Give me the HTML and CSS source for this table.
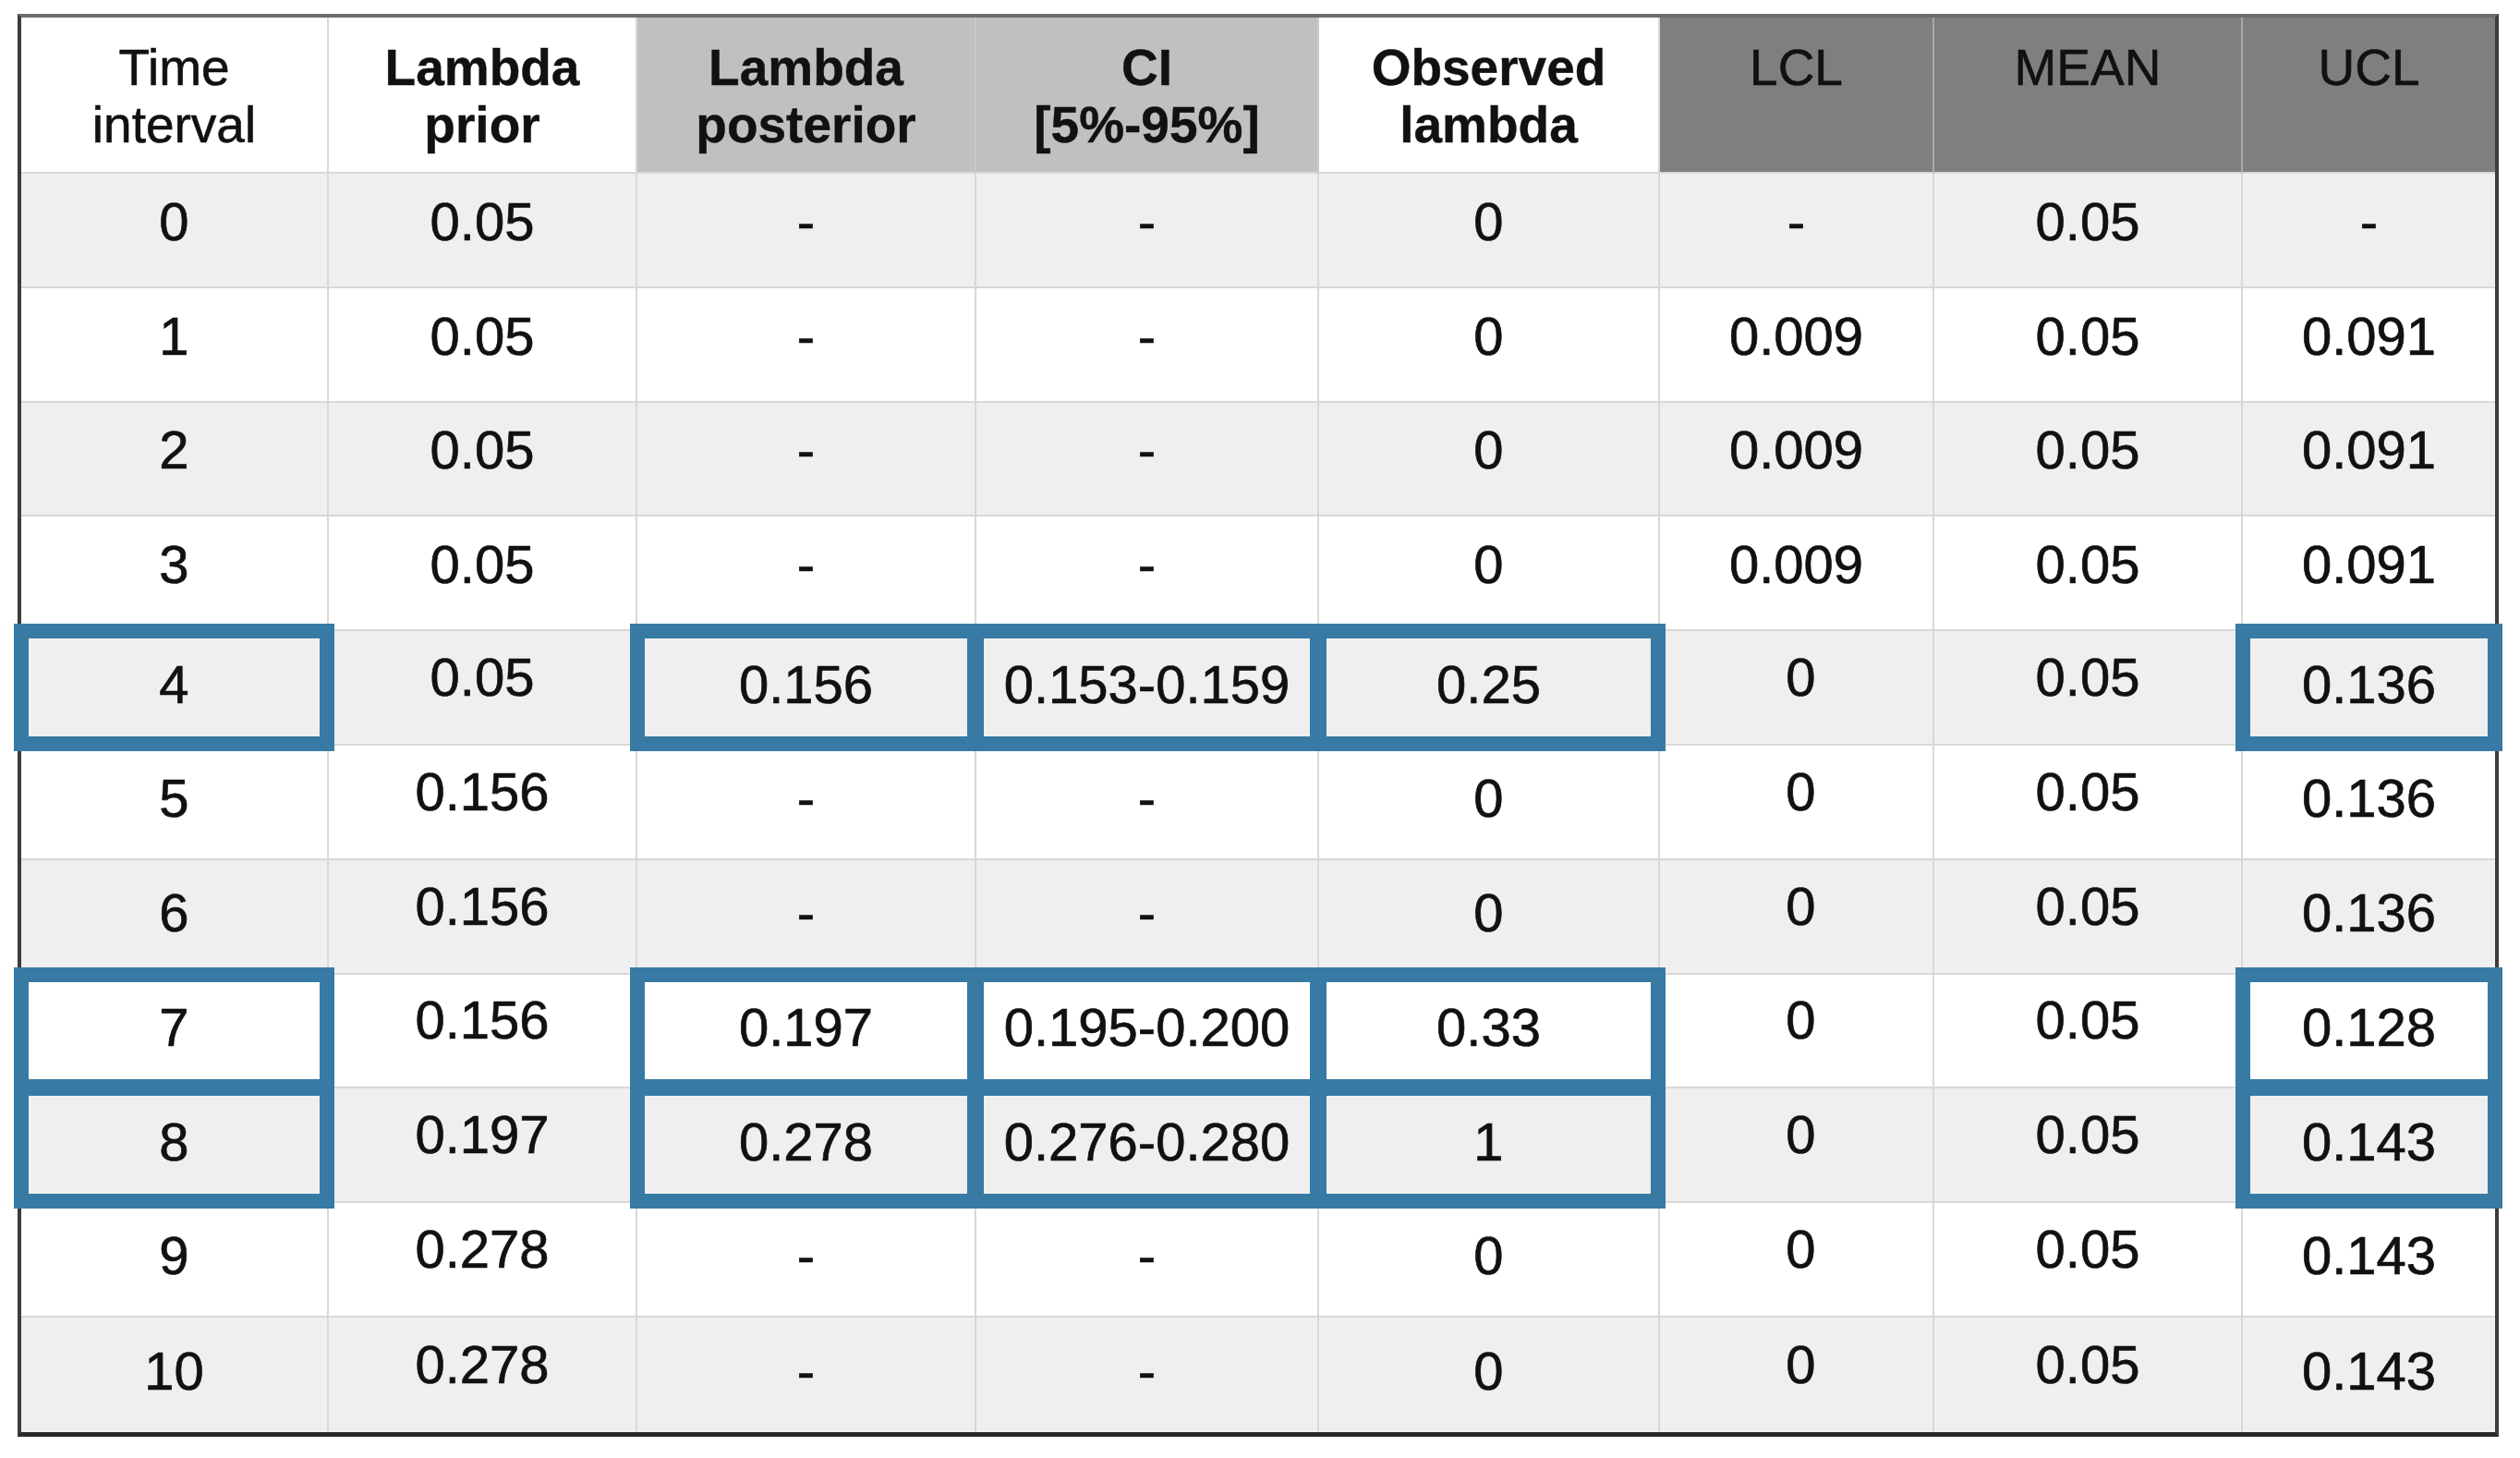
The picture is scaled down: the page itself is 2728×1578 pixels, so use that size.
FILE: index.html
```html
<!DOCTYPE html>
<html lang="en">
<head>
<meta charset="utf-8">
<title>Lambda table</title>
<link rel="stylesheet" href="styles.css">
</head>
<body>
<table class="grid">
  <colgroup>
    <col class="c1"><col class="c2"><col class="c3"><col class="c4"><col class="c5"><col class="c6"><col class="c7"><col class="c8">
  </colgroup>
  <thead>
    <tr class="head">
      <th class="h-white">Time<br>interval</th>
      <th class="h-white b">Lambda<br>prior</th>
      <th class="h-light b">Lambda<br>posterior</th>
      <th class="h-light b">CI<br>[5%-95%]</th>
      <th class="h-white b">Observed<br>lambda</th>
      <th class="h-dark">LCL</th>
      <th class="h-dark">MEAN</th>
      <th class="h-dark">UCL</th>
    </tr>
  </thead>
  <tbody>
    <tr class="alt up"><td>0</td><td>0.05</td><td>-</td><td>-</td><td>0</td><td>-</td><td>0.05</td><td>-</td></tr>
    <tr class="up"><td>1</td><td>0.05</td><td>-</td><td>-</td><td>0</td><td>0.009</td><td>0.05</td><td>0.091</td></tr>
    <tr class="alt up"><td>2</td><td>0.05</td><td>-</td><td>-</td><td>0</td><td>0.009</td><td>0.05</td><td>0.091</td></tr>
    <tr class="up"><td>3</td><td>0.05</td><td>-</td><td>-</td><td>0</td><td>0.009</td><td>0.05</td><td>0.091</td></tr>
    <tr class="alt"><td class="box">4</td><td class="r">0.05</td><td class="box">0.156</td><td class="box">0.153-0.159</td><td class="box">0.25</td><td class="r rs">0</td><td class="r">0.05</td><td class="box">0.136</td></tr>
    <tr><td>5</td><td class="r">0.156</td><td>-</td><td>-</td><td>0</td><td class="r rs">0</td><td class="r">0.05</td><td>0.136</td></tr>
    <tr class="alt"><td>6</td><td class="r">0.156</td><td>-</td><td>-</td><td>0</td><td class="r rs">0</td><td class="r">0.05</td><td>0.136</td></tr>
    <tr><td class="box">7</td><td class="r">0.156</td><td class="box">0.197</td><td class="box">0.195-0.200</td><td class="box">0.33</td><td class="r rs">0</td><td class="r">0.05</td><td class="box">0.128</td></tr>
    <tr class="alt"><td class="box">8</td><td class="r">0.197</td><td class="box">0.278</td><td class="box">0.276-0.280</td><td class="box">1</td><td class="r rs">0</td><td class="r">0.05</td><td class="box">0.143</td></tr>
    <tr><td>9</td><td class="r">0.278</td><td>-</td><td>-</td><td>0</td><td class="r rs">0</td><td class="r">0.05</td><td>0.143</td></tr>
    <tr class="alt"><td>10</td><td class="r">0.278</td><td>-</td><td>-</td><td>0</td><td class="r rs">0</td><td class="r">0.05</td><td>0.143</td></tr>
  </tbody>
</table>
</body>
</html>
```

FILE: styles.css
```css
html, body {
  margin: 0;
  padding: 0;
  background: #ffffff;
}

body {
  font-family: "Liberation Sans", Arial, sans-serif;
  color: #111111;
}

.grid {
  margin: 15px 0 0 19px;
  border-collapse: separate;
  border-spacing: 0;
  table-layout: fixed;
  width: 2686px;
  border-style: solid;
  border-width: 4px 4px 5px 4px;
  border-color: #6c6c6c #3c3c3c #2a2a2a #3c3c3c;
}

.c1 { width: 333px; }
.c2 { width: 334px; }
.c3 { width: 367px; }
.c4 { width: 371px; }
.c5 { width: 369px; }
.c6 { width: 297px; }
.c7 { width: 334px; }
.c8 { width: 273px; }

th, td {
  padding: 0;
  text-align: center;
  border-right: 2px solid #d8d8d8;
  border-bottom: 2px solid #d8d8d8;
}

th:last-child, td:last-child {
  border-right: none;
}

tbody tr:last-child td {
  border-bottom: none;
}

.head {
  height: 169px;
}

th {
  vertical-align: top;
  padding-top: 23px;
  font-size: 55px;
  line-height: 62px;
  font-weight: normal;
  -webkit-text-stroke: 0.6px #111111;
}

th.b {
  font-weight: bold;
  -webkit-text-stroke: 0.4px #111111;
}

.h-white { background: #ffffff; }
.h-light { background: #c0c0c0; border-right-color: #cacaca; }
.h-dark { background: #7f7f7f; border-right-color: #a9a9a9; }

tbody tr {
  height: 123.8px;
  background: #ffffff;
}

tbody tr.alt {
  background: #efefef;
}

td {
  vertical-align: middle;
  font-size: 58px;
  line-height: 66px;
  padding-bottom: 8px;
  -webkit-text-stroke: 0.7px #111111;
}

tr.up td {
  padding-bottom: 18px;
}

td.r {
  padding-bottom: 22px;
}

td.rs {
  padding-left: 10px;
}

td.box {
  position: relative;
  padding-bottom: 6px;
}

td.box::after {
  content: "";
  position: absolute;
  top: -8px;
  left: -8px;
  right: -8px;
  bottom: -8px;
  border: 16px solid #377ba4;
  z-index: 1;
  pointer-events: none;
}
```
